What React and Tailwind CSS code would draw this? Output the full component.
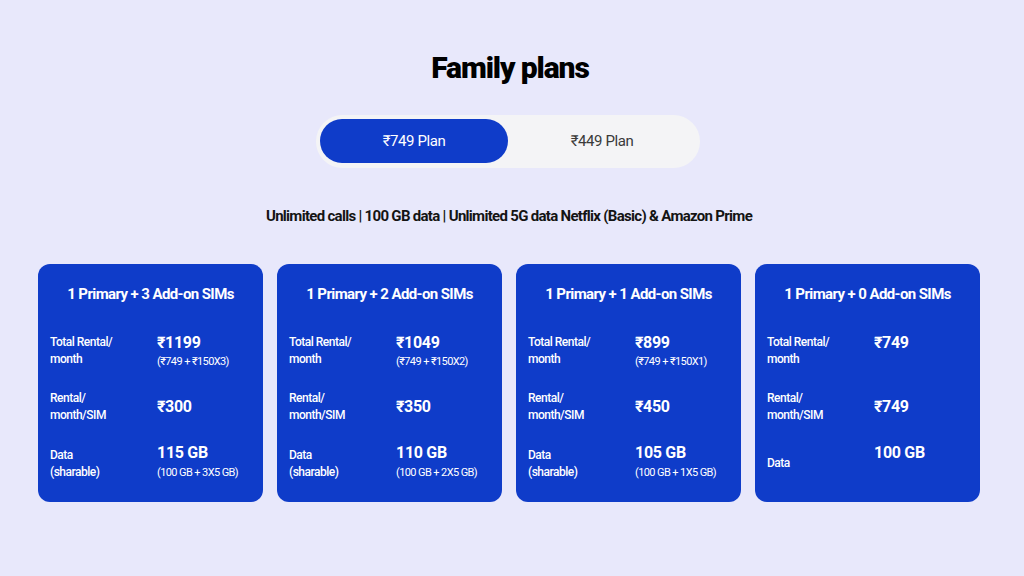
import { useState } from 'react';

const plans = [
    { title: "1 Primary + 3 Add-on SIMs", total: "₹1199", totalNote: "(₹749 + ₹150X3)", perSim: "₹300", data: "115 GB", dataNote: "(100 GB + 3X5 GB)", sharable: true },
    { title: "1 Primary + 2 Add-on SIMs", total: "₹1049", totalNote: "(₹749 + ₹150X2)", perSim: "₹350", data: "110 GB", dataNote: "(100 GB + 2X5 GB)", sharable: true },
    { title: "1 Primary + 1 Add-on SIMs", total: "₹899", totalNote: "(₹749 + ₹150X1)", perSim: "₹450", data: "105 GB", dataNote: "(100 GB + 1X5 GB)", sharable: true },
    { title: "1 Primary + 0 Add-on SIMs", total: "₹749", totalNote: null, perSim: "₹749", data: "100 GB", dataNote: null, sharable: false },
];

function PlanCard({ plan }) {
    return (
        <article className="w-[225px] h-[238px] rounded-xl bg-[#0f3cc9] text-white px-3 pt-[21px]">
            <h3 className="text-center text-[15px] leading-[18px] font-bold tracking-[-0.6px] whitespace-nowrap">{plan.title}</h3>

            <div className="mt-[31px] flex flex-col gap-[19px]">
                <div className="flex items-start min-h-[36px]">
                    <span className="w-[107px] text-[12px] leading-[17px] font-medium tracking-[-0.5px]">Total Rental/<br />month</span>
                    <div className="flex flex-col">
                        <span className="text-[16px] leading-[18px] font-bold tracking-[-0.3px]">{plan.total}</span>
                        {plan.totalNote && <span className="text-[11px] leading-[16px] mt-[2px] tracking-[-0.6px]">{plan.totalNote}</span>}
                    </div>
                </div>

                <div className="flex items-center min-h-[36px]">
                    <span className="w-[107px] text-[12px] leading-[17px] font-medium tracking-[-0.5px]">Rental/<br />month/SIM</span>
                    <span className="text-[16px] leading-[18px] font-bold tracking-[-0.3px]">{plan.perSim}</span>
                </div>

                <div className="flex items-start min-h-[36px]">
                    <span className="w-[107px] self-center text-[12px] leading-[17px] font-medium tracking-[-0.5px] translate-y-[1px]">
                        Data{plan.sharable && <><br />(sharable)</>}
                    </span>
                    <div className="flex flex-col">
                        <span className="text-[16px] leading-[18px] font-bold tracking-[-0.3px]">{plan.data}</span>
                        {plan.dataNote && <span className="text-[11px] leading-[16px] mt-[3px] tracking-[-0.6px] whitespace-nowrap">{plan.dataNote}</span>}
                    </div>
                </div>
            </div>
        </article>
    );
}

export default function App() {
    const [active, setActive] = useState(0);

    return (
        <div className="min-h-screen w-full bg-[#e8e8fb] font-['Roboto',sans-serif] text-black">
            <main className="flex flex-col items-center pt-[48px]">
                <h1 className="text-[30px] leading-[40px] font-black tracking-[-1.1px] -translate-x-[2px]">Family plans</h1>

                <div className="mt-[27px] w-[384px] h-[53px] rounded-full bg-[#f4f4f6] p-[4px] flex -translate-x-[4px]">
                    {["₹749 Plan", "₹449 Plan"].map((label, i) => (
                        <button
                            key={label}
                            onClick={() => setActive(i)}
                            className={`w-[188px] h-[44px] rounded-full text-[15px] tracking-[-0.4px] ${active === i ? "bg-[#0f3cc9] text-white" : "text-[#3a3a3a]"}`}
                        >
                            {label}
                        </button>
                    ))}
                </div>

                <p className="mt-[38px] text-[15px] leading-[20px] font-bold tracking-[-0.7px] text-[#141414] -translate-x-[3px]">
                    Unlimited calls | 100 GB data | Unlimited 5G data Netflix (Basic) &amp; Amazon Prime
                </p>

                <section className="mt-[38px] flex gap-[14px] -translate-x-[3px]">
                    {plans.map((plan) => (
                        <PlanCard key={plan.title} plan={plan} />
                    ))}
                </section>
            </main>
        </div>
    );
}
